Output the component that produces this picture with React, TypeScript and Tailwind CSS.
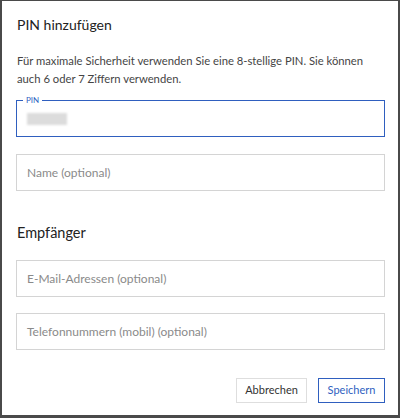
import React from "react";

const font = { fontFamily: "Lato, 'Noto Sans', sans-serif" };

const Field = ({ placeholder }: { placeholder: string }) => (
  <div className="h-[37px] w-full border border-[#d4d4d4] flex items-center pl-[10px] text-[12px] text-[#8a8a8a]">
    {placeholder}
  </div>
);

const App = () => {
  return (
    <div
      className="w-[400px] h-[418px] bg-white border-t border-l-2 border-r-2 border-b-[3px] border-[#4a4a4a] pl-[14px] pr-[13px] pt-[12px] flex flex-col"
      style={font}
    >
      <h1 className="text-[14px] leading-[24px] text-[#222] font-normal pl-px">
        PIN hinzufügen
      </h1>
      <p className="mt-[15px] text-[11.25px] leading-[18px] text-[#444] pl-px">
        Für maximale Sicherheit verwenden Sie eine 8-stellige PIN. Sie können
        auch 6 oder 7 Ziffern verwenden.
      </p>

      <div className="relative mt-[12px] h-[37px] w-full border-[1.5px] border-[#2f5fbf] flex items-center pl-[10px]">
        <span className="absolute -top-[6px] left-[6px] bg-white px-[3px] text-[8px] leading-[10px] text-[#2f5fbf]">
          PIN
        </span>
        <div className="h-[12px] w-[40px] bg-[#dcdcdc] blur-[1px]" />
      </div>

      <div className="mt-[17px]">
        <Field placeholder="Name (optional)" />
      </div>

      <h2 className="mt-[30px] text-[14.5px] leading-[24px] text-[#222] font-normal pl-px">
        Empfänger
      </h2>

      <div className="mt-[15px]">
        <Field placeholder="E-Mail-Adressen (optional)" />
      </div>
      <div className="mt-[16px]">
        <Field placeholder="Telefonnummern (mobil) (optional)" />
      </div>

      <div className="mt-[28px] flex justify-end gap-[11px]">
        <button
          type="button"
          className="h-[25px] w-[71px] border border-[#dedede] text-[11px] text-[#333] bg-white"
        >
          Abbrechen
        </button>
        <button
          type="button"
          className="h-[25px] w-[67px] border-[1.5px] border-[#2f5fbf] text-[11px] text-[#2f5fbf] bg-white"
        >
          Speichern
        </button>
      </div>
    </div>
  );
};

export default App;
